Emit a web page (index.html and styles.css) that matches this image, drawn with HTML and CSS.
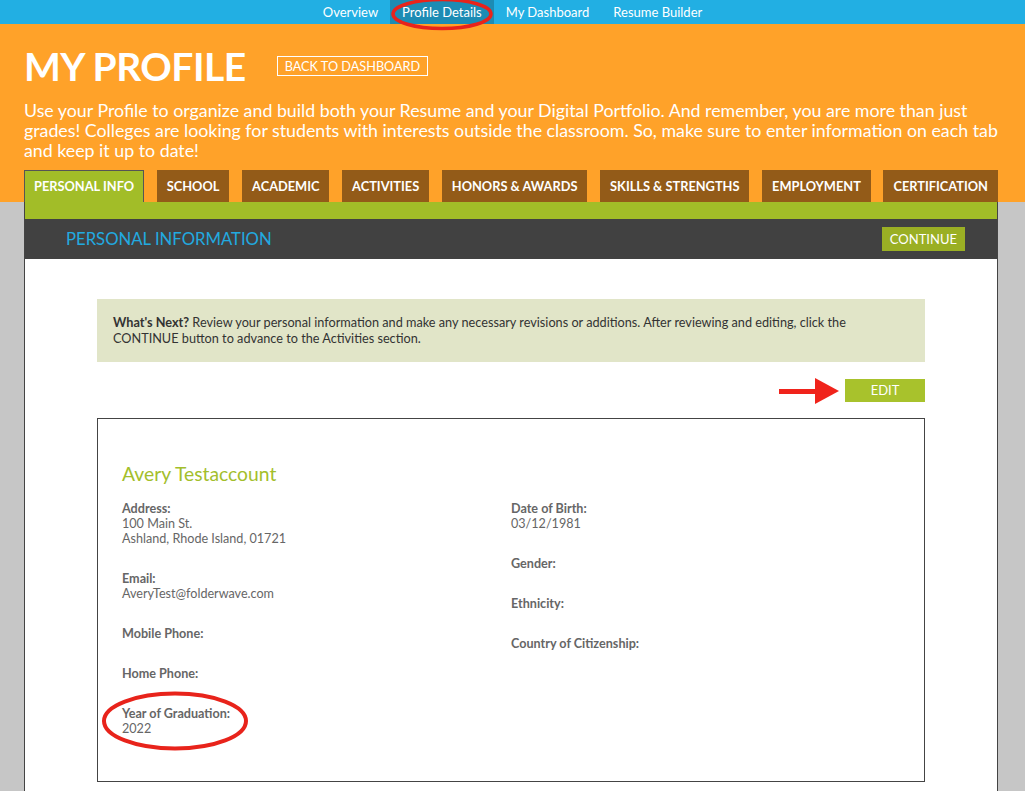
FILE: index.html
```html
<!DOCTYPE html>
<html lang="en">
<head>
    <meta charset="UTF-8">
    <meta name="viewport" content="width=device-width, initial-scale=1.0">
    <title>My Profile</title>
    <link rel="stylesheet" href="styles.css">
</head>
<body>
<nav class="topnav">
    <a href="#">Overview</a>
    <a href="#" class="active">Profile Details
        <svg class="mark-nav" width="108" height="36" viewBox="0 0 108 36"><ellipse cx="54" cy="17" rx="49" ry="14.5" fill="none" stroke="#e8231b" stroke-width="3.5"/></svg>
    </a>
    <a href="#">My Dashboard</a>
    <a href="#">Resume Builder</a>
</nav>

<header class="hero">
    <div class="hero-title">
        <h1>MY PROFILE</h1>
        <a href="#" class="btn-outline">BACK TO DASHBOARD</a>
    </div>
    <p class="hero-text">Use your Profile to organize and build both your Resume and your Digital Portfolio. And remember, you are more than just grades! Colleges are looking for students with interests outside the classroom. So, make sure to enter information on each tab and keep it up to date!</p>
    <ul class="tabs">
        <li class="active">PERSONAL INFO</li>
        <li>SCHOOL</li>
        <li>ACADEMIC</li>
        <li>ACTIVITIES</li>
        <li>HONORS &amp; AWARDS</li>
        <li>SKILLS &amp; STRENGTHS</li>
        <li>EMPLOYMENT</li>
        <li>CERTIFICATION</li>
    </ul>
</header>

<main class="panel">
    <div class="panel-strip"></div>
    <div class="panel-bar">
        <h2>PERSONAL INFORMATION</h2>
        <a href="#" class="btn">CONTINUE</a>
    </div>

    <div class="panel-body">
        <div class="notice">
            <b>What's Next?</b> Review your personal information and make any necessary revisions or additions. After reviewing and editing, click the CONTINUE button to advance to the Activities section.
        </div>

        <div class="edit-row">
            <svg class="arrow" width="62" height="26" viewBox="0 0 62 26">
                <rect x="0" y="11" width="38" height="5" fill="#f0231b"/>
                <polygon points="36,0 60,13 36,26" fill="#f0231b"/>
            </svg>
            <a href="#" class="btn btn-edit">EDIT</a>
        </div>

        <div class="card">
            <h3>Avery Testaccount</h3>
            <div class="cols">
                <div class="col">
                    <div class="field">
                        <div class="label">Address:</div>
                        <div>100 Main St.</div>
                        <div>Ashland, Rhode Island, 01721</div>
                    </div>
                    <div class="field">
                        <div class="label">Email:</div>
                        <div>AveryTest@folderwave.com</div>
                    </div>
                    <div class="field">
                        <div class="label">Mobile Phone:</div>
                    </div>
                    <div class="field">
                        <div class="label">Home Phone:</div>
                    </div>
                    <div class="field marked">
                        <div class="label">Year of Graduation:</div>
                        <div>2022</div>
                        <svg class="mark-year" width="156" height="64" viewBox="0 0 156 64"><ellipse cx="78" cy="32" rx="71" ry="27.5" fill="none" stroke="#e8231b" stroke-width="4"/></svg>
                    </div>
                </div>
                <div class="col">
                    <div class="field">
                        <div class="label">Date of Birth:</div>
                        <div>03/12/1981</div>
                    </div>
                    <div class="field">
                        <div class="label">Gender:</div>
                    </div>
                    <div class="field">
                        <div class="label">Ethnicity:</div>
                    </div>
                    <div class="field">
                        <div class="label">Country of Citizenship:</div>
                    </div>
                </div>
            </div>
        </div>
    </div>
</main>
</body>
</html>
```

FILE: styles.css
```css
body {
    margin: 0;
    font-family: Lato, "Open Sans", sans-serif;
    background: #c6c6c6;
}

/* top navigation */
.topnav {
    height: 24px;
    background: #22afe3;
    display: flex;
    justify-content: center;
}

.topnav a {
    position: relative;
    display: block;
    padding: 0 12px;
    line-height: 24px;
    font-size: 13px;
    color: #fff;
    text-decoration: none;
}

.topnav a.active {
    background: #1c8cb4;
}

.mark-nav {
    position: absolute;
    left: -2px;
    top: -3px;
}

/* orange header */
.hero {
    background: #ffa229;
    padding: 18px 27px 0 24px;
    color: #fff;
}

.hero-title {
    display: flex;
    align-items: center;
}

.hero h1 {
    margin: 0;
    font-size: 39px;
    line-height: 48px;
    font-weight: 700;
    letter-spacing: -0.5px;
}

.btn-outline {
    margin-left: 31px;
    border: 1px solid #fff;
    padding: 1px 7px;
    font-size: 12.7px;
    line-height: 16px;
    color: #fff;
    text-decoration: none;
}

.hero-text {
    margin: 10px -11px 10px 0;
    font-size: 17.8px;
    line-height: 20px;
}

.tabs {
    list-style: none;
    margin: 0;
    padding: 0;
    display: flex;
    justify-content: space-between;
}

.tabs li {
    height: 32px;
    line-height: 32px;
    padding: 0 10px;
    background: #935b18;
    font-size: 12.8px;
    font-weight: 700;
    color: #fff;
}

.tabs li.active {
    background: #a2bd28;
    border: 1px solid #555;
    border-bottom: 0;
    height: 31px;
    line-height: 31px;
    padding: 0 9px;
}

/* main panel */
.panel {
    margin: 0 27px 0 24px;
    background: #fff;
    border-left: 1px solid #444;
    border-right: 1px solid #444;
    padding-bottom: 40px;
}

.panel-strip {
    height: 17px;
    background: #a2bd28;
}

.panel-bar {
    height: 40px;
    background: #414141;
    display: flex;
    align-items: center;
    justify-content: space-between;
    padding: 0 32px 0 41px;
}

.panel-bar h2 {
    margin: 0;
    font-size: 16.7px;
    font-weight: 400;
    color: #22aae0;
}

.btn {
    display: block;
    background: #9aaf24;
    color: #fff;
    font-size: 13px;
    line-height: 24px;
    padding: 0 8px;
    text-decoration: none;
}

.panel-body {
    width: 828px;
    margin: 0 auto;
    padding-top: 40px;
}

.notice {
    background: #e1e5c8;
    padding: 15px 16px 16px;
    font-size: 12.7px;
    line-height: 16px;
    color: #333;
}

.edit-row {
    display: flex;
    justify-content: flex-end;
    align-items: center;
    margin: 17px 0 16px;
}

.arrow {
    margin: -2px 4px -2px 0;
}

.btn-edit {
    width: 80px;
    text-align: center;
    padding: 0;
    line-height: 23px;
    background: #a8c22c;
}

.card {
    border: 1px solid #444;
    padding: 43px 24px 45px;
    color: #666;
}

.card h3 {
    margin: 0 0 15px;
    font-size: 19.3px;
    line-height: 24px;
    font-weight: 400;
    color: #a3be2b;
}

.cols {
    display: grid;
    grid-template-columns: 1fr 1fr;
}

.field {
    font-size: 12.6px;
    line-height: 15px;
    margin-bottom: 25px;
}

.field:last-child {
    margin-bottom: 0;
}

.label {
    font-weight: 700;
}

.marked {
    position: relative;
}

.mark-year {
    position: absolute;
    left: -25.5px;
    top: -17.5px;
}
```
